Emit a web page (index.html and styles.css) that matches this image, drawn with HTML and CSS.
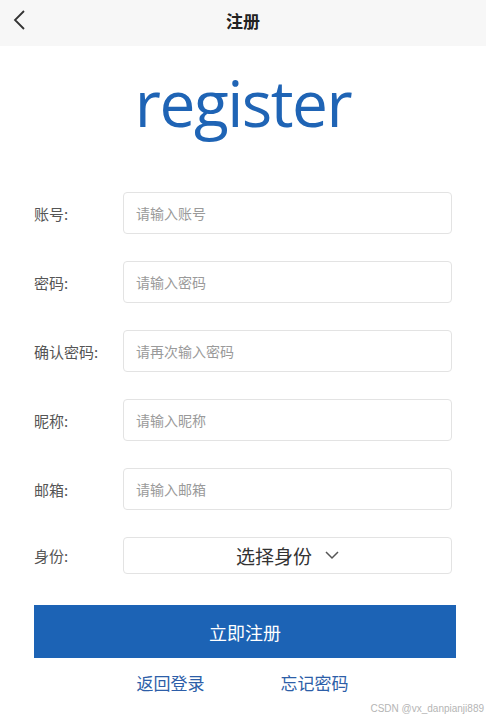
FILE: index.html
```html
<!DOCTYPE html>
<html lang="zh-CN">
<head>
  <meta charset="UTF-8" />
  <meta name="viewport" content="width=device-width, initial-scale=1.0"/>
  <title>注册</title>
  <link rel="stylesheet" href="styles.css">
</head>

<body>
  <div class="top-bar">
    <span class="back">
      <svg width="14" height="22" viewBox="0 0 14 22"><path d="M12 2 L3 11 L12 20" fill="none" stroke="#333" stroke-width="1.8"/></svg>
    </span>
    <h1>注册</h1>
  </div>

  <div class="logo">register</div>

  <form class="reg-form">
    <div class="row">
      <label>账号:</label>
      <input type="text" placeholder="请输入账号">
    </div>
    <div class="row">
      <label>密码:</label>
      <input type="password" placeholder="请输入密码">
    </div>
    <div class="row">
      <label>确认密码:</label>
      <input type="password" placeholder="请再次输入密码">
    </div>
    <div class="row">
      <label>昵称:</label>
      <input type="text" placeholder="请输入昵称">
    </div>
    <div class="row">
      <label>邮箱:</label>
      <input type="email" placeholder="请输入邮箱">
    </div>
    <div class="row row-select">
      <label>身份:</label>
      <div class="picker">
        <span>选择身份</span>
        <svg width="14" height="9" viewBox="0 0 14 9"><path d="M1 1 L7 7 L13 1" fill="none" stroke="#555" stroke-width="1.5"/></svg>
      </div>
    </div>

    <button type="submit" class="submit-btn">立即注册</button>

    <div class="links">
      <a href="#">返回登录</a>
      <a href="#">忘记密码</a>
    </div>
  </form>

  <div class="watermark">CSDN @vx_danpianji889</div>
</body>
</html>
```

FILE: styles.css
```css
* {
  margin: 0;
  padding: 0;
  box-sizing: border-box;
  font-family: "Noto Sans CJK SC", sans-serif;
}

body {
  background: #ffffff;
  width: 486px;
  height: 721px;
  position: relative;
  overflow: hidden;
}

.top-bar {
  height: 46px;
  background: #f7f7f7;
  display: flex;
  align-items: center;
  justify-content: center;
  position: relative;
}

.top-bar h1 {
  font-size: 17px;
  font-weight: bold;
  color: #222;
  margin-top: -5px;
}

.back {
  position: absolute;
  left: 12px;
  top: 9px;
}

.logo {
  text-align: center;
  font-family: "Open Sans", sans-serif;
  font-size: 64px;
  color: #1f64b5;
  line-height: 1;
  padding-top: 25px;
  height: 146px;
  letter-spacing: -1.5px;
}

.reg-form {
  display: flex;
  flex-direction: column;
  gap: 27px;
  padding: 0 30px 0 34px;
}

.row {
  display: flex;
  align-items: center;
  padding-right: 4px;
}

.row label {
  width: 89px;
  font-size: 15px;
  color: #555;
}

.row input {
  flex: 1;
  height: 42px;
  border: 1px solid #e3e3e3;
  border-radius: 4px;
  padding: 0 12px;
  font-size: 14px;
  color: #333;
  outline: none;
}

.row input::placeholder {
  color: #9a9a9a;
}

.picker {
  flex: 1;
  height: 37px;
  border: 1px solid #e3e3e3;
  border-radius: 4px;
  display: flex;
  align-items: center;
  justify-content: center;
  gap: 13px;
  font-size: 19px;
  color: #333;
}

.submit-btn {
  margin-top: 4px;
  height: 53px;
  background: #1c63b5;
  color: #fff;
  border: none;
  font-size: 18px;
  cursor: pointer;
}

.links {
  display: flex;
  justify-content: center;
  gap: 76px;
  margin-top: -15px;
  padding-right: 5px;
}

.links a {
  font-size: 17px;
  color: #2d5ea8;
  text-decoration: none;
}

.watermark {
  position: absolute;
  right: 2px;
  bottom: 7px;
  font-family: "Liberation Sans", sans-serif;
  font-size: 10px;
  color: #b5b5b5;
}
```
